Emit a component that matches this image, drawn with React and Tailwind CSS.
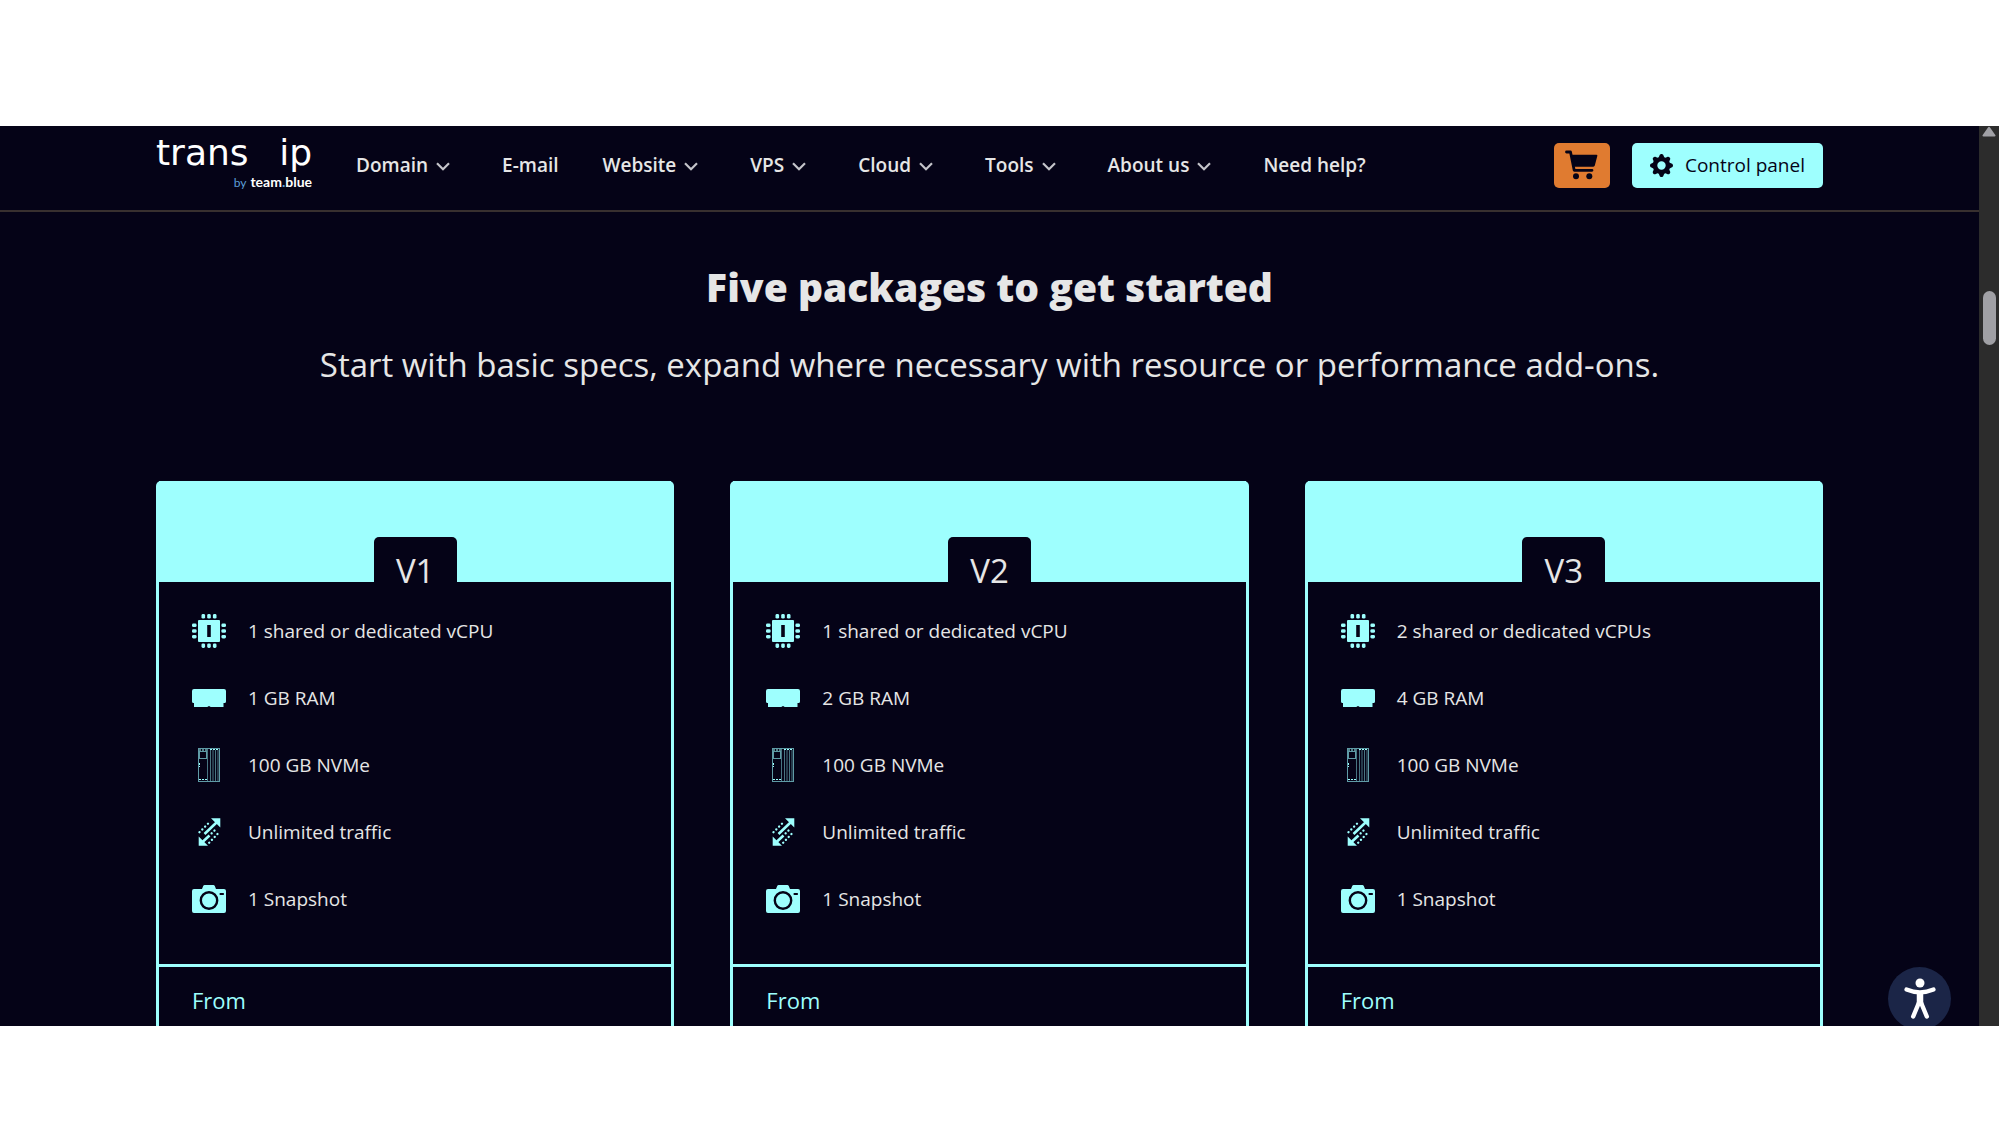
import React from "react";
import { BsGearFill } from "react-icons/bs";

const navItems = [
  { label: "Domain", menu: true },
  { label: "E-mail", menu: false },
  { label: "Website", menu: true },
  { label: "VPS", menu: true },
  { label: "Cloud", menu: true },
  { label: "Tools", menu: true },
  { label: "About us", menu: true },
  { label: "Need help?", menu: false },
];

const packages = [
  { name: "V1", cpu: "1 shared or dedicated vCPU", ram: "1 GB RAM" },
  { name: "V2", cpu: "1 shared or dedicated vCPU", ram: "2 GB RAM" },
  { name: "V3", cpu: "2 shared or dedicated vCPUs", ram: "4 GB RAM" },
];

function Chevron() {
  return (
    <svg className="ml-2 mr-2 mt-0.5 h-[9px] w-[14px]" viewBox="0 0 14 9" fill="none" stroke="#c4c4ca" strokeWidth="2.2" aria-hidden="true">
      <path d="M1 1.2 L7 7.2 L13 1.2" />
    </svg>
  );
}

function CpuIcon() {
  const pins = [9.5, 15.2, 20.9];
  return (
    <svg width="34" height="34" viewBox="0 0 34 34" fill="currentColor" aria-hidden="true">
      <path fillRule="evenodd" d="M7 6h20a1 1 0 0 1 1 1v20a1 1 0 0 1-1 1H7a1 1 0 0 1-1-1V7a1 1 0 0 1 1-1Zm8.2 5v12h3.6V11Z" />
      {pins.map((p) => (
        <g key={p}>
          <rect x={p} y="0" width="3.6" height="4.6" rx="1.4" />
          <rect x={p} y="29.4" width="3.6" height="4.6" rx="1.4" />
          <rect x="0" y={p} width="4.6" height="3.6" rx="1.4" />
          <rect x="29.4" y={p} width="4.6" height="3.6" rx="1.4" />
        </g>
      ))}
    </svg>
  );
}

function RamIcon() {
  return (
    <svg width="34" height="34" viewBox="0 0 34 34" fill="currentColor" aria-hidden="true">
      <path d="M2 8h30a2 2 0 0 1 2 2v10.5a1.5 1.5 0 0 1-1.5 1.5H31.5v4H18.5l-.6-.8h-1.8l-.6.8H2v-4H1.5A1.5 1.5 0 0 1 0 20.5V10a2 2 0 0 1 2-2Z" />
    </svg>
  );
}

function NvmeIcon() {
  return (
    <svg width="34" height="34" viewBox="0 0 34 34" fill="none" stroke="#5f9ba6" strokeWidth="1" aria-hidden="true">
      <rect x="6.5" y="0.5" width="21" height="33" />
      <path d="M15.5 1v32M18.5 2v31M21 2v31M23.5 2v31M26 2v31" strokeOpacity="0.75" />
      <rect x="7.5" y="3.5" width="7" height="7" />
      <path d="M7 2h8M18 1.5h9" stroke="#9efffe" strokeDasharray="2 1" />
      <path d="M7.5 15v4M7 31.5h8" strokeDasharray="2 1" stroke="#9efffe" />
    </svg>
  );
}

function TrafficIcon() {
  return (
    <svg width="34" height="34" viewBox="0 0 34 34" fill="currentColor" stroke="currentColor" aria-hidden="true">
      <path d="M19 3.3h9.3v9.3Z M6.7 21.5v9.3H16Z" stroke="none" />
      <path d="M24.5 7.5 L12.5 19 M10.5 27 L17.5 20.5" strokeWidth="2.6" />
      <path d="M16 8.7 L6.5 18.2 M22.5 15.5 L18 20 M25.5 19 L15.5 29.5" strokeWidth="2.3" strokeLinecap="round" strokeDasharray="0.1 3.9" />
    </svg>
  );
}

function CameraIcon() {
  return (
    <svg width="34" height="34" viewBox="0 0 34 34" fill="currentColor" aria-hidden="true">
      <path d="M2 7h8l1.2-3a1.6 1.6 0 0 1 1.5-1h8.6a1.6 1.6 0 0 1 1.5 1L24 7h8a2 2 0 0 1 2 2v20a2 2 0 0 1-2 2H2a2 2 0 0 1-2-2V9a2 2 0 0 1 2-2Z" />
      <circle cx="17" cy="18.5" r="8.2" fill="none" stroke="#050317" strokeWidth="2.4" />
      <rect x="27.5" y="11" width="4.5" height="2" rx="0.8" fill="#050317" />
    </svg>
  );
}

function CartIcon() {
  return (
    <svg width="33" height="30" viewBox="0 0 33 30" fill="#050317" aria-hidden="true">
      <path d="M1.5 2 H5.5 L9.2 20.3 H27" fill="none" stroke="#050317" strokeWidth="2.8" strokeLinecap="round" strokeLinejoin="round" />
      <path d="M6.5 4.7H31.3a1 1 0 0 1 1 1.3L29.8 15.6a1.5 1.5 0 0 1-1.5 1.1H9Z" />
      <circle cx="11" cy="26.2" r="3" />
      <circle cx="24.3" cy="26.2" r="3" />
    </svg>
  );
}

function Logo() {
  return (
    <a href="#" aria-label="transip by team.blue" className="mt-1.5 flex w-[156px] flex-col self-start text-white">
      <span className="flex justify-between font-['DejaVu_Sans',sans-serif] text-4xl leading-[42px]">
        <span>trans</span>
        <span>ip</span>
      </span>
      <span className="flex items-baseline justify-end gap-1 font-['Lato',sans-serif] text-sm leading-4">
        <span className="text-xs text-[#5d9fd8]">by</span>
        <span className="font-bold">
          team<span className="text-[#5d9fd8]">.</span>blue
        </span>
      </span>
    </a>
  );
}

function Header() {
  return (
    <header className="border-b-2 border-[#38302f]">
      <div className="mx-auto flex h-[84px] w-full max-w-[1667px] items-center pb-1.5">
        <Logo />
        <nav className="ml-11 flex gap-11 text-[19px] font-semibold text-[#e6e6e6]">
          {navItems.map((item) => (
            <a key={item.label} href="#" className="flex items-center whitespace-nowrap">
              {item.label}
              {item.menu && <Chevron />}
            </a>
          ))}
        </nav>
        <div className="ml-auto flex gap-[22px]">
          <button type="button" aria-label="Cart" className="flex h-[45px] w-14 items-center justify-center rounded-[5px] bg-[#e07b30]">
            <CartIcon />
          </button>
          <button type="button" className="flex h-[45px] items-center gap-3 whitespace-nowrap rounded-[5px] bg-[#9efffe] px-[18px] text-[19px] text-[#050317]">
            <BsGearFill size={23} />
            Control panel
          </button>
        </div>
      </div>
    </header>
  );
}

function PackageCard({ pkg }) {
  const specs = [
    { icon: <CpuIcon />, text: pkg.cpu },
    { icon: <RamIcon />, text: pkg.ram },
    { icon: <NvmeIcon />, text: "100 GB NVMe" },
    { icon: <TrafficIcon />, text: "Unlimited traffic" },
    { icon: <CameraIcon />, text: "1 Snapshot" },
  ];

  return (
    <article className="rounded-t-[5px] border-x-[3px] border-[#9efffe]">
      <div className="flex h-[101px] items-end justify-center bg-[#9efffe]">
        <h3 className="h-[45px] w-[83px] rounded-t-[5px] bg-[#050317] pt-3 text-center text-[33px] leading-[44px] text-[#e6e6e6]">
          {pkg.name}
        </h3>
      </div>
      <ul className="flex flex-col gap-[33px] px-[33px] pb-12 pt-8 text-[19px] text-[#e6e6e6]">
        {specs.map((spec) => (
          <li key={spec.text} className="flex h-[34px] items-center gap-[22px] text-[#9efffe]">
            {spec.icon}
            <span className="text-[#e6e6e6]">{spec.text}</span>
          </li>
        ))}
      </ul>
      <div className="border-t-[3px] border-[#9efffe] px-[33px] pb-[10px] pt-[17px]">
        <p className="text-[22px] leading-8 text-[#9efffe]">From</p>
      </div>
    </article>
  );
}

export default function App() {
  return (
    <div className="min-h-screen bg-white pt-[126px] font-['Open_Sans',sans-serif]">
      <div className="relative flex overflow-hidden bg-[#050317]">
        <div className="min-w-0 flex-1">
          <Header />
          <main className="mx-auto w-full max-w-[1667px] pt-12 text-[#e6e6e6]">
            <h2 className="text-center text-[39px] font-extrabold leading-[54px]">Five packages to get started</h2>
            <p className="mt-[26px] text-center text-[33px] leading-[50px]">
              Start with basic specs, expand where necessary with resource or performance add-ons.
            </p>
            <section className="mt-[91px] grid grid-cols-3 gap-14">
              {packages.map((pkg) => (
                <PackageCard key={pkg.name} pkg={pkg} />
              ))}
            </section>
          </main>
        </div>

        {/* Scrollbar */}
        <div className="flex w-5 flex-col items-center bg-[#2c2c2c]">
          <svg width="14" height="11" viewBox="0 0 14 11" fill="#a0a0a5" aria-hidden="true">
            <path d="M6 1.5a1.2 1.2 0 0 1 2 0l5.3 7.5c.5.8.1 1.5-.8 1.5h-11c-.9 0-1.3-.7-.8-1.5Z" />
          </svg>
          <div className="mt-[154px] h-[54px] w-[13px] rounded-full bg-[#a0a0a5]" />
        </div>

        {/* Accessibility widget */}
        <button type="button" aria-label="Accessibility" className="absolute -bottom-1 right-12 flex size-[63px] items-center justify-center rounded-full bg-[#1b2547]">
          <svg width="32" height="42" viewBox="0 0 32 42" fill="white" stroke="white" strokeLinecap="round" strokeLinejoin="round" aria-hidden="true">
            <circle cx="16" cy="5" r="4.5" stroke="none" />
            <path d="M2.5 11.5 C11 15 21 15 29.5 11.5" fill="none" strokeWidth="4.2" />
            <path d="M13.5 14.5h5v12h-5Z" strokeWidth="1.5" />
            <path d="M14.8 25 L9.2 38.5 M17.2 25 L22.8 38.5" fill="none" strokeWidth="4.4" />
          </svg>
        </button>
      </div>
    </div>
  );
}
